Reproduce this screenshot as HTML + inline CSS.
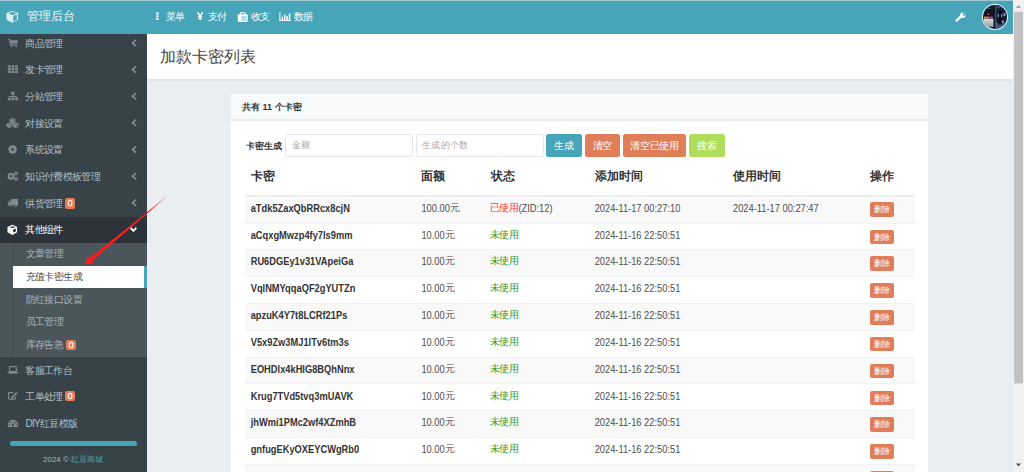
<!DOCTYPE html>
<html><head><meta charset="utf-8">
<style>
*{box-sizing:border-box;margin:0;padding:0}
html,body{width:1024px;height:472px;overflow:hidden}
body{font-family:"Liberation Sans",sans-serif;background:#eaeef1;position:relative;color:#333}
.abs{position:absolute;white-space:nowrap}
#hdr{position:absolute;left:0;top:0;width:1013px;height:34px;background:#46a5b8}
#hdr .topline{position:absolute;left:0;top:0;width:1013px;height:1px;background:#a4cbd4}
#logo{left:27px;top:8px;font-size:12.3px;line-height:16px;color:#eef7f9}
.nav{top:8.8px;font-size:10px;letter-spacing:-0.6px;line-height:16px;color:#fff}
#side{position:absolute;left:0;top:34px;width:146.6px;height:438px;background:#384349;overflow:hidden}
.tx{position:absolute;left:25.4px;height:26.65px;line-height:27.2px;font-size:10px;letter-spacing:-0.65px;color:#b4c0c6;white-space:nowrap}
.badge{position:absolute;width:10.2px;height:10.2px;background:#e47d56;color:#fff;font-size:9px;line-height:10.2px;text-align:center;border-radius:2px;padding-left:0.2px;transform-origin:50% 50%}
.badge b{display:block;font-weight:normal;transform:translateY(0.8px) scale(0.92,1.08)}
#sub{position:absolute;left:0;top:209px;width:147px;height:114px;background:#4b555c}
.stx{position:absolute;left:25.8px;height:22.7px;line-height:21.8px;font-size:10px;letter-spacing:-0.65px;color:#aab5bb;white-space:nowrap}
#content{position:absolute;left:147px;top:34px;width:866px;height:438px}
#ph{position:absolute;left:0;top:0;width:866px;height:47px;background:#fff;border-bottom:2px solid #e1e5e9}
#title{left:13px;top:11px;font-size:16.3px;line-height:22px;color:#444}
#box{position:absolute;left:84px;top:60px;width:697px;height:400px;background:#fff;border-radius:2px}
#boxh{position:absolute;left:0;top:0;width:697px;height:27px;background:#f9fafc;border-bottom:2px solid #e9edf1}
.btn{position:absolute;top:40px;height:23px;line-height:23px;color:#fff;font-size:10px;letter-spacing:-0.3px;text-align:center;border-radius:2.5px}
.inp{position:absolute;top:40.2px;height:23.3px;border:1px solid #e2e6ea;border-radius:2.5px;background:#fff}
.inp span{position:absolute;left:5.5px;top:0;line-height:21px;font-size:9px;letter-spacing:0.3px;color:#a9a9a9}
table{position:absolute;left:13.5px;top:66px;width:670px;border-collapse:separate;border-spacing:0;table-layout:fixed}
th{font-size:11.7px;text-align:left;height:37px;font-weight:bold;color:#333;padding:0 0 2.5px 6.2px;border-bottom:2px solid #eceff2}
td{font-size:9.3px;height:26.83px;padding:0 0 3.5px 6.2px;border-top:1px solid #f0f2f4;color:#4d4d4d;white-space:nowrap}
tbody tr:first-child td{border-top:0;height:25.5px;padding-bottom:4.5px}
tbody tr:nth-child(odd) td{background:#f9f9f9}
td.code{font-weight:bold;color:#333}
td span.s{display:inline-block;transform:translateY(1.2px) scaleY(1.13);transform-origin:0 60%}
tr.last td{padding-top:3px}
tr.last .del{top:0.7px}
i.y{font-style:normal;font-size:10px;letter-spacing:0}
td span.s .grn,td span.s .red,td span.s i.y{display:inline-block;transform:translateY(-0.5px) scaleY(0.885)}
td span.s .grn,td span.s .red{margin-left:-0.9px}
.red{color:#f33;font-size:10px;letter-spacing:-0.4px}
.grn{color:#25992b;font-size:10px;letter-spacing:-0.4px}
.del{position:relative;top:2.2px;display:inline-block;background:#e07e5a;color:#fff;font-size:8.3px;width:24px;height:14.5px;line-height:14.5px;text-align:center;border-radius:2px}
#sb{position:absolute;left:1013px;top:0;width:11px;height:472px;background:#f1f1f1}
</style></head><body>
<div id="hdr"><div class="topline"></div>
  <svg class="abs" style="left:0;top:0" width="1013" height="34" viewBox="0 0 1013 34">
    <!-- logo cube -->
    <g transform="translate(6.4,10.9)">
      <path fill="#dcedf1" fill-rule="evenodd" d="M5.9 0 L11.7 2.2 V8.9 L5.9 11.9 L0 8.9 V2.2Z M1.9 2.4 L6.2 4.1 L10.5 2.4 L6.2 1.1Z M6.9 4.9 V10.6 L10.5 8.7 V3.5Z"/>
    </g>
    <!-- ellipsis-v -->
    <g fill="#fff"><rect x="156.2" y="12.3" width="2.3" height="2.1" rx="0.5"/><rect x="156.2" y="15.2" width="2.3" height="2" rx="0.5"/><rect x="156.2" y="18" width="2.3" height="2" rx="0.5"/></g>
    <!-- yen -->
    <g fill="none" stroke="#fff" stroke-width="1.5"><path d="M197.6 12.3 L200.1 16.3 L202.6 12.3"/><path d="M200.1 16 V20.1"/><path d="M197.9 16.5 H202.3 M197.9 18.3 H202.3" stroke-width="1"/></g>
    <!-- suitcase -->
    <g transform="translate(237.75,12.2)">
      <path d="M2.6 2.2 V1.2 Q2.6 0.5 3.3 0.5 H6.7 Q7.4 0.5 7.4 1.2 V2.2" fill="none" stroke="#fff" stroke-width="1.1"/>
      <rect x="0" y="2.1" width="10" height="7.6" rx="1.2" fill="#fff"/>
      <rect x="3.6" y="3.4" width="5.3" height="5.3" fill="#b3dbe3"/>
    </g>
    <!-- bar chart -->
    <g fill="#fff" transform="translate(279.4,12.2)">
      <rect x="0" y="0" width="1" height="8.8"/><rect x="0" y="7.9" width="11.5" height="0.9"/>
      <rect x="2.2" y="4.6" width="1.5" height="3.3"/><rect x="4.6" y="2.5" width="1.5" height="5.4"/><rect x="7" y="3.8" width="1.5" height="4.1"/><rect x="9.4" y="1.2" width="1.5" height="6.7"/>
    </g>
    <!-- wrench -->
    <g fill="#fff">
      <path d="M956.6 20.6 L962 15.4" stroke="#fff" stroke-width="2.3" stroke-linecap="round"/>
      <path fill-rule="evenodd" d="M962.8 12.6 A2.7 2.7 0 1 1 960.1 15.3 A2.7 2.7 0 0 1 962.8 12.6Z M963.3 12.3 L965.9 14.9 L965.2 15.5 L963.1 15.4 L962.8 14.1Z"/>
    </g>
    <!-- avatar -->
    <defs><clipPath id="av"><circle cx="994.95" cy="16.95" r="11.9"/></clipPath>
      <linearGradient id="gb" x1="0" y1="0" x2="0" y2="1"><stop offset="0" stop-color="#d6dadf"/><stop offset="1" stop-color="#9aa0a8"/></linearGradient>
      <linearGradient id="rp" x1="0" y1="0" x2="1" y2="1"><stop offset="0" stop-color="#1a2640"/><stop offset="1" stop-color="#39507a"/></linearGradient></defs>
    <circle cx="994.95" cy="16.95" r="13.1" fill="#d6eef3"/>
    <g clip-path="url(#av)">
      <rect x="980" y="3" width="30" height="28" fill="#0e1524"/>
      <rect x="995.3" y="3" width="12" height="28" fill="#152238"/>
      <rect x="995.3" y="22" width="12" height="9" fill="#3c5a82"/>
      <rect x="995.3" y="5" width="0.9" height="24" fill="#5f7ea8"/>
      <rect x="996" y="6.5" width="9" height="1.2" fill="#3a5072"/>
      <path d="M998.6 11.6 A1.4 1.4 0 1 1 1001.4 11.6 L1002.6 14.5 L1003.2 19 L1002 24.5 H998 L997 19 L997.5 14.5Z" fill="#0b1120"/>
      <path d="M997.6 14.6 L998.8 13.8 L999 16.5 L998 18Z M1001.3 13.8 L1002.5 14.6 L1002 18 L1001 16.5Z" fill="#8a9bb5"/>
      <rect x="1003.5" y="13" width="2" height="3" fill="#7d95b8"/>
      <rect x="1001.8" y="20.5" width="2" height="2.5" fill="#a08a8a"/>
      <rect x="983.8" y="18.85" width="9.9" height="8" fill="url(#gb)"/>
      <rect x="984.1" y="16.6" width="2.6" height="2.2" fill="#d9a23a"/>
      <rect x="987" y="16.6" width="2.5" height="2.2" fill="#e0703f"/>
      <rect x="990.5" y="16.6" width="2.2" height="2.2" fill="#c253c2"/>
      <circle cx="988.3" cy="14.1" r="1" fill="#e0344a"/>
      <rect x="993.7" y="3" width="1.6" height="28" fill="#121826"/>
      <rect x="986" y="7.8" width="5.5" height="1" fill="#4a5470"/>
    </g>
  </svg>
  <div class="abs" id="logo">管理后台</div>
  <div class="abs nav" style="left:165.5px">菜单</div>
  <div class="abs nav" style="left:207.5px">支付</div>
  <div class="abs nav" style="left:251px">收支</div>
  <div class="abs nav" style="left:293.5px">数据</div>
</div>

<div id="side">
  <div class="abs" style="left:0;top:182.6px;width:147px;height:26.25px;background:#2c333a"></div>
  <div class="tx" style="top:-4.35px">商品管理</div>
  <div class="tx" style="top:22.3px">发卡管理</div>
  <div class="tx" style="top:48.95px">分站管理</div>
  <div class="tx" style="top:75.6px">对接设置</div>
  <div class="tx" style="top:102.25px">系统设置</div>
  <div class="tx" style="top:128.9px">知识付费模板管理</div>
  <div class="tx" style="top:155.55px">供货管理</div>
  <div class="tx" style="top:182.2px;color:#fff">其他组件</div>
  <div id="sub">
    <div class="stx" style="top:0">文章管理</div>
    <div class="abs" style="left:12.5px;top:0;width:1px;height:114px;background:#434c53"></div>
    <div class="abs" style="left:13px;top:23.1px;width:131px;height:22.1px;background:#fff"></div>
    <div class="abs" style="left:144px;top:23.1px;width:3px;height:22.1px;background:#46a5b8"></div>
    <div class="stx" style="top:23.3px;color:#4a4a4a">充值卡密生成</div>
    <div class="stx" style="top:45.5px">防红接口设置</div>
    <div class="stx" style="top:68.2px">员工管理</div>
    <div class="stx" style="top:90.9px">库存告急</div>
  </div>
  <div class="tx" style="top:322.5px">客服工作台</div>
  <div class="tx" style="top:349.15px">工单处理</div>
  <div class="tx" style="top:375.8px">DIY红豆模版</div>
  <div class="badge" style="left:65px;top:164.4px"><svg width="10.2" height="10.2" viewBox="0 0 10.2 10.2" style="position:absolute;left:0;top:0"><ellipse cx="5.1" cy="5.1" rx="1.85" ry="2.75" fill="none" stroke="#fff" stroke-width="1.05"/></svg></div>
  <div class="badge" style="left:65.6px;top:305.9px"><svg width="10.2" height="10.2" viewBox="0 0 10.2 10.2" style="position:absolute;left:0;top:0"><ellipse cx="5.1" cy="5.1" rx="1.85" ry="2.75" fill="none" stroke="#fff" stroke-width="1.05"/></svg></div>
  <div class="badge" style="left:65px;top:357px"><svg width="10.2" height="10.2" viewBox="0 0 10.2 10.2" style="position:absolute;left:0;top:0"><ellipse cx="5.1" cy="5.1" rx="1.85" ry="2.75" fill="none" stroke="#fff" stroke-width="1.05"/></svg></div>
  <div class="abs" style="left:10px;top:407px;width:127px;height:5.3px;border-radius:3px;background:#46a5b8"></div>
  <div class="abs" style="left:43px;top:419px;font-size:8px;line-height:14px;color:#aab5bb">2024 © <span style="color:#46a5b8">红豆商城</span></div>
  <svg class="abs" style="left:0;top:-34px" width="147" height="472" viewBox="0 0 147 472">
    <g fill="#7f8a91">
      <!-- cart -->
      <g transform="translate(8.15,39.3)">
        <path d="M0 0.2 H1.6 L2.4 5.6 H9.2" fill="none" stroke="#7f8a91" stroke-width="1.2"/>
        <path d="M1.6 0.9 H9.6 L9.1 4.3 H2.2 Z"/>
        <rect x="2.6" y="6.3" width="1.8" height="1.3"/><rect x="7.2" y="6.3" width="1.8" height="1.3"/>
      </g>
      <!-- th -->
      <g transform="translate(7.9,65.3)">
        <rect x="0" y="0" width="2.9" height="2.2"/><rect x="3.6" y="0" width="2.9" height="2.2"/><rect x="7.2" y="0" width="2.9" height="2.2"/>
        <rect x="0" y="2.75" width="2.9" height="2.2"/><rect x="3.6" y="2.75" width="2.9" height="2.2"/><rect x="7.2" y="2.75" width="2.9" height="2.2"/>
        <rect x="0" y="5.5" width="2.9" height="2.2"/><rect x="3.6" y="5.5" width="2.9" height="2.2"/><rect x="7.2" y="5.5" width="2.9" height="2.2"/>
      </g>
      <!-- sitemap -->
      <g transform="translate(7.9,91.8)">
        <rect x="3.3" y="0" width="3.4" height="3"/><rect x="4.6" y="3" width="0.8" height="1.4"/>
        <path d="M1 4.3 H9 V5.9 H8.3 V5.1 H5.4 V5.9 H4.6 V5.1 H1.7 V5.9 H1Z"/>
        <rect x="0" y="5.9" width="2.8" height="2.6"/><rect x="3.6" y="5.9" width="2.8" height="2.6"/><rect x="7.2" y="5.9" width="2.8" height="2.6"/>
      </g>
      <!-- cubes -->
      <g transform="translate(6.4,117.9)">
        <path d="M6.2 0 L9.1 1.2 V4.3 L6.2 5.5 L3.3 4.3 V1.2Z"/>
        <path d="M3 4.5 L5.9 5.7 V8.8 L3 10 L0.1 8.8 V5.7Z"/>
        <path d="M9.4 4.5 L12.3 5.7 V8.8 L9.4 10 L6.5 8.8 V5.7Z"/>
        <g fill="#384349"><rect x="5.4" y="1.2" width="1.6" height="0.8"/><rect x="7.1" y="2.5" width="1.4" height="1.3"/><rect x="2" y="5.8" width="1.8" height="0.8"/><rect x="8.6" y="5.8" width="1.8" height="0.8"/><rect x="3.9" y="7.1" width="1.3" height="1.3"/><rect x="10.4" y="7.1" width="1.3" height="1.3"/></g>
      </g>
      <!-- gear -->
      <g transform="translate(12.6,149.45)">
        <path d="M-0.9 -4.45 H0.9 L1.2 -3.2 L2.6 -3.8 L3.8 -2.6 L3.2 -1.2 L4.45 -0.9 V0.9 L3.2 1.2 L3.8 2.6 L2.6 3.8 L1.2 3.2 L0.9 4.45 H-0.9 L-1.2 3.2 L-2.6 3.8 L-3.8 2.6 L-3.2 1.2 L-4.45 0.9 V-0.9 L-3.2 -1.2 L-3.8 -2.6 L-2.6 -3.8 L-1.2 -3.2Z M0 -1.4 A1.4 1.4 0 1 0 0.01 -1.4Z" fill-rule="evenodd"/>
      </g>
      <!-- cogs -->
      <g transform="translate(11.1,176.3)">
        <path d="M-0.8 -3.6 H0.8 L1.1 -2.6 L2.3 -3.2 L3.2 -2.3 L2.6 -1.1 L3.6 -0.8 V0.8 L2.6 1.1 L3.2 2.3 L2.3 3.2 L1.1 2.6 L0.8 3.6 H-0.8 L-1.1 2.6 L-2.3 3.2 L-3.2 2.3 L-2.6 1.1 L-3.6 0.8 V-0.8 L-2.6 -1.1 L-3.2 -2.3 L-2.3 -3.2 L-1.1 -2.6Z M0 -1.3 A1.3 1.3 0 1 0 0.01 -1.3Z" fill-rule="evenodd"/>
        <path d="M4.9 -2.8 m-2 0 a2 2 0 1 0 4 0 a2 2 0 1 0 -4 0 M4.9 -3.5 a0.7 0.7 0 1 1 -0.01 0Z" fill-rule="evenodd"/>
        <path d="M4.9 2.6 m-2 0 a2 2 0 1 0 4 0 a2 2 0 1 0 -4 0 M4.9 1.9 a0.7 0.7 0 1 1 -0.01 0Z" fill-rule="evenodd"/>
      </g>
      <!-- truck -->
      <g transform="translate(7.9,199.1)">
        <path d="M3.3 0 H10.1 V6.2 H0 V3.2 L1.6 1.4 H3.3Z"/>
        <rect x="0.9" y="2.2" width="1.7" height="1.1" fill="#384349"/>
        <circle cx="2.7" cy="6.5" r="1.4"/><circle cx="7.6" cy="6.5" r="1.4"/>
        <circle cx="2.7" cy="6.5" r="0.6" fill="#384349"/><circle cx="7.6" cy="6.5" r="0.6" fill="#384349"/>
      </g>
      <!-- laptop -->
      <g transform="translate(7.6,366.1)">
        <rect x="1.9" y="0.55" width="6.8" height="4.9" rx="0.6" fill="none" stroke="#7f8a91" stroke-width="1.1"/>
        <rect x="0" y="5.8" width="10.5" height="1.6" rx="0.4"/>
      </g>
      <!-- edit -->
      <g transform="translate(8,392.1)">
        <path d="M5.2 0.55 H1.1 Q0.55 0.55 0.55 1.1 V6.5 Q0.55 7.05 1.1 7.05 H6.8 Q7.35 7.05 7.35 6.5 V4.5" fill="none" stroke="#7f8a91" stroke-width="1.1"/>
        <path d="M3.2 4.9 L8.3 -0.2 L9.6 1.1 L4.5 6.2 L2.9 6.5Z"/>
      </g>
      <!-- dashboard -->
      <g transform="translate(7.9,419.6)">
        <path d="M0 7.4 V5.2 A5.05 5.05 0 0 1 10.1 5.2 V7.4Z"/>
        <g fill="#384349"><circle cx="5.05" cy="1.5" r="0.65"/><circle cx="2.6" cy="2.6" r="0.65"/><circle cx="7.5" cy="2.6" r="0.65"/><circle cx="1.6" cy="4.9" r="0.65"/><circle cx="8.5" cy="4.9" r="0.65"/><circle cx="4.9" cy="5.7" r="1"/><path d="M4.6 5.4 L6.2 2.4 L6.7 2.6 L5.4 5.8Z"/></g>
      </g>
      <!-- chevrons -->
      <g fill="none" stroke="#7f8a91" stroke-width="1.85">
        <path d="M135.9 39.80 L132.6 42.90 L135.9 46.00"/>
        <path d="M135.9 66.45 L132.6 69.55 L135.9 72.65"/>
        <path d="M135.9 93.10 L132.6 96.20 L135.9 99.30"/>
        <path d="M135.9 119.75 L132.6 122.85 L135.9 125.95"/>
        <path d="M135.9 146.40 L132.6 149.50 L135.9 152.60"/>
        <path d="M135.9 173.05 L132.6 176.15 L135.9 179.25"/>
        <path d="M135.9 199.70 L132.6 202.80 L135.9 205.90"/>
        <path d="M130.6 227.8 L133.45 230.9 L136.3 227.8" stroke="#fff" stroke-width="1.8"/>
      </g>
    </g>
    <!-- white cube -->
    <g transform="translate(7.26,224.8)">
      <path fill="#fff" fill-rule="evenodd" d="M5.2 0 L9.8 2.3 V7.5 L5.2 10.2 L0.2 7.4 V2.3Z M2.1 2.4 L5.3 3.25 L8.5 2.4 L5.3 1.55Z M5.9 4.5 V7.6 L8.6 6.7 V3.9Z"/>
    </g>
  </svg>
</div>

<!-- red arrow -->
<svg class="abs" style="left:0;top:0" width="1024" height="472" viewBox="0 0 1024 472">
  <path d="M167.9 195.2 L145 215.6 L91.8 260.9 L89.5 258.2 L144.2 214.6 Z" fill="#ff1c1c"/>
  <path d="M85 264.3 L87.7 255.9 L90.2 258.6 L93.7 262.9 Z" fill="#ff1c1c"/>
</svg>
<div id="content">
  <div id="ph"><div class="abs" id="title">加款卡密列表</div></div>
  <div id="box">
    <div id="boxh"><div class="abs" style="left:11px;top:5px;font-size:9px;line-height:16px;font-weight:bold;color:#333">共有 11 个卡密</div></div>
    <div class="abs" style="left:14.5px;top:43.5px;font-size:9px;letter-spacing:0.25px;line-height:16px;font-weight:bold;color:#333">卡密生成</div>
    <div class="inp" style="left:54px;width:128px"><span>金额</span></div>
    <div class="inp" style="left:184.5px;width:128px"><span>生成的个数</span></div>
    <div class="btn" style="left:315px;width:36px;background:#46a5b8">生成</div>
    <div class="btn" style="left:353.5px;width:35.5px;background:#e07e5a">清空</div>
    <div class="btn" style="left:392px;width:63px;background:#e07e5a">清空已使用</div>
    <div class="btn" style="left:458px;width:35.75px;background:#aedd5b">搜索</div>
    <table>
      <colgroup><col style="width:170.75px"><col style="width:69.1px"><col style="width:104.15px"><col style="width:138.35px"><col style="width:137.3px"><col style="width:50.35px"></colgroup>
      <thead><tr class="h"><th>卡密</th><th>面额</th><th>状态</th><th>添加时间</th><th>使用时间</th><th>操作</th></tr></thead>
      <tbody>
        <tr><td class="code"><span class="s">aTdk5ZaxQbRRcx8cjN</span></td><td><span class="s">100.00<i class="y">元</i></span></td><td><span class="s"><span class="red">已使用</span>(ZID:12)</span></td><td><span class="s">2024-11-17 00:27:10</span></td><td><span class="s">2024-11-17 00:27:47</span></td><td><span class="del">删除</span></td></tr>
        <tr><td class="code"><span class="s">aCqxgMwzp4fy7ls9mm</span></td><td><span class="s">10.00<i class="y">元</i></span></td><td><span class="s"><span class="grn">未使用</span></span></td><td><span class="s">2024-11-16 22:50:51</span></td><td></td><td><span class="del">删除</span></td></tr>
        <tr><td class="code"><span class="s">RU6DGEy1v31VApeiGa</span></td><td><span class="s">10.00<i class="y">元</i></span></td><td><span class="s"><span class="grn">未使用</span></span></td><td><span class="s">2024-11-16 22:50:51</span></td><td></td><td><span class="del">删除</span></td></tr>
        <tr><td class="code"><span class="s">VqlNMYqqaQF2gYUTZn</span></td><td><span class="s">10.00<i class="y">元</i></span></td><td><span class="s"><span class="grn">未使用</span></span></td><td><span class="s">2024-11-16 22:50:51</span></td><td></td><td><span class="del">删除</span></td></tr>
        <tr><td class="code"><span class="s">apzuK4Y7t8LCRf21Ps</span></td><td><span class="s">10.00<i class="y">元</i></span></td><td><span class="s"><span class="grn">未使用</span></span></td><td><span class="s">2024-11-16 22:50:51</span></td><td></td><td><span class="del">删除</span></td></tr>
        <tr><td class="code"><span class="s">V5x9Zw3MJ1lTv6tm3s</span></td><td><span class="s">10.00<i class="y">元</i></span></td><td><span class="s"><span class="grn">未使用</span></span></td><td><span class="s">2024-11-16 22:50:51</span></td><td></td><td><span class="del">删除</span></td></tr>
        <tr><td class="code"><span class="s">EOHDlx4kHIG8BQhNnx</span></td><td><span class="s">10.00<i class="y">元</i></span></td><td><span class="s"><span class="grn">未使用</span></span></td><td><span class="s">2024-11-16 22:50:51</span></td><td></td><td><span class="del">删除</span></td></tr>
        <tr><td class="code"><span class="s">Krug7TVd5tvq3mUAVK</span></td><td><span class="s">10.00<i class="y">元</i></span></td><td><span class="s"><span class="grn">未使用</span></span></td><td><span class="s">2024-11-16 22:50:51</span></td><td></td><td><span class="del">删除</span></td></tr>
        <tr><td class="code"><span class="s">jhWmi1PMc2wf4XZmhB</span></td><td><span class="s">10.00<i class="y">元</i></span></td><td><span class="s"><span class="grn">未使用</span></span></td><td><span class="s">2024-11-16 22:50:51</span></td><td></td><td><span class="del">删除</span></td></tr>
        <tr><td class="code"><span class="s">gnfugEKyOXEYCWgRb0</span></td><td><span class="s">10.00<i class="y">元</i></span></td><td><span class="s"><span class="grn">未使用</span></span></td><td><span class="s">2024-11-16 22:50:51</span></td><td></td><td><span class="del">删除</span></td></tr>
        <tr class="last"><td class="code"><span class="s">tYq8KmN2vWzR5pLxA3</span></td><td><span class="s">10.00<i class="y">元</i></span></td><td><span class="s"><span class="grn">未使用</span></span></td><td><span class="s">2024-11-16 22:50:51</span></td><td></td><td><span class="del">删除</span></td></tr>
      </tbody>
    </table>
  </div>
</div>

<div id="sb">
  <svg class="abs" style="left:0;top:0" width="11" height="472" viewBox="1013 0 11 472">
    <path d="M1015.9 7.9 L1018.45 4.9 L1021 7.9Z" fill="#a3a3a3"/>
    <rect x="1014.1" y="11.8" width="8.9" height="371.6" fill="#c1c1c1"/>
    <path d="M1016 463.6 L1018.5 466.6 L1021 463.6Z" fill="#505050"/>
  </svg>
</div>
</body></html>
